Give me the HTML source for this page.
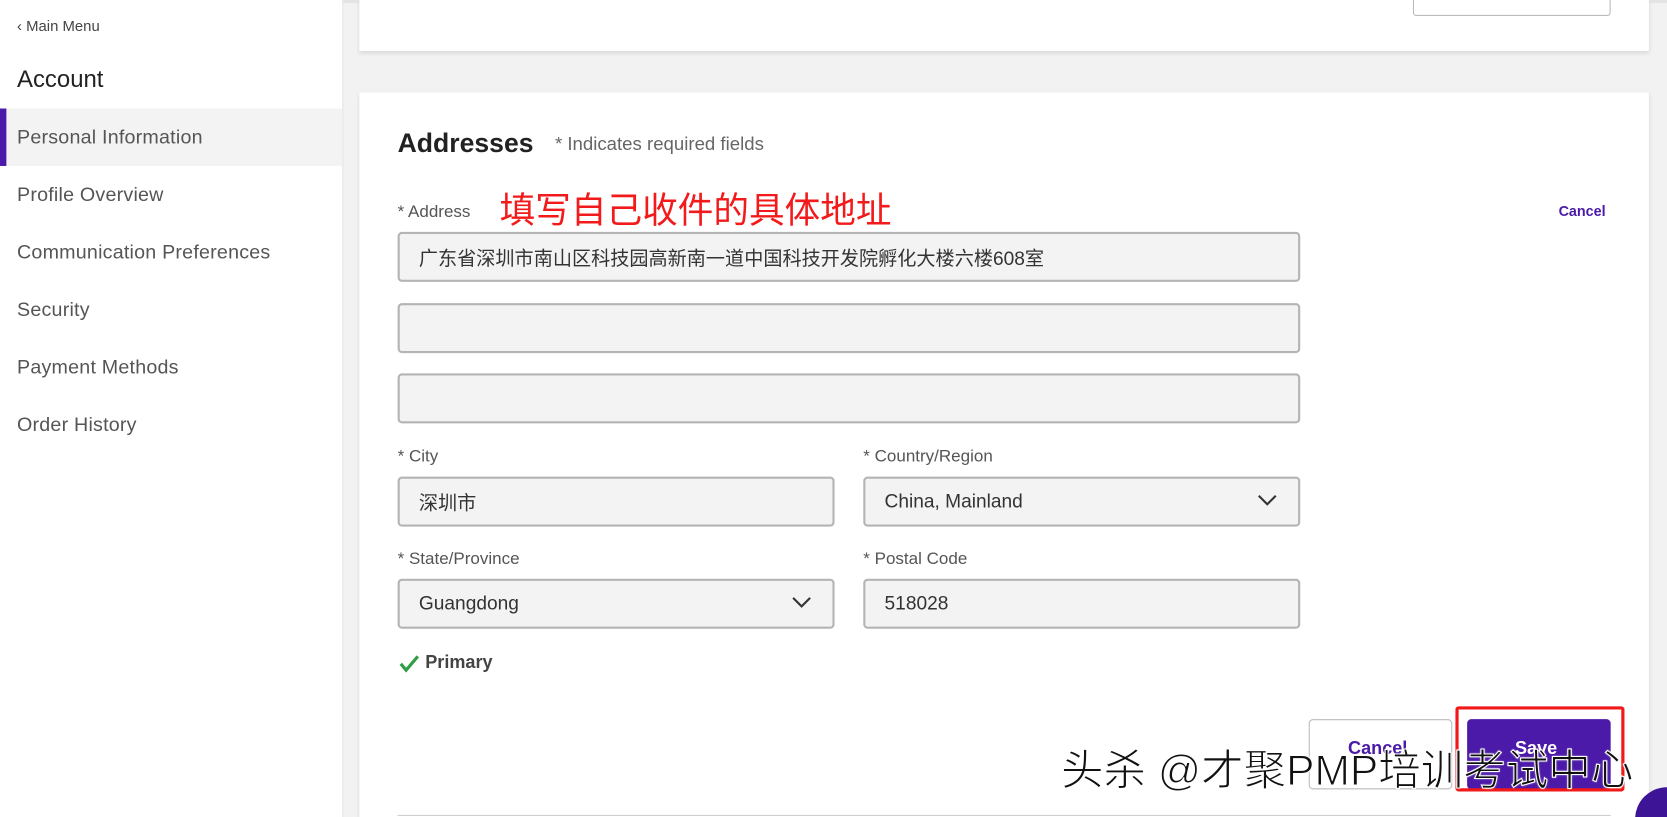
<!DOCTYPE html>
<html><head><meta charset="utf-8"><style>
html,body{margin:0;padding:0;width:1667px;height:817px;overflow:hidden;background:#f2f2f2;}
#w{position:absolute;left:0;top:0;width:1568px;height:768px;overflow:hidden;transform:scale(1.06314,1.0638);transform-origin:0 0;font-family:"Liberation Sans","Noto Sans CJK SC",sans-serif;color:#333;}
.a{position:absolute;white-space:nowrap;}
.side{position:absolute;left:0;top:0;width:322px;height:768px;background:#fff;border-right:1px solid #e2e2e2;}
.item{position:absolute;left:16px;font-size:18.5px;letter-spacing:.2px;color:#555;}
.card{position:absolute;background:#fff;box-shadow:0 2px 4px rgba(0,0,0,.12);}
.inp{position:absolute;background:#f3f3f3;border:2px solid #b4b4b4;border-radius:4px;box-sizing:border-box;font-size:18px;color:#333;padding-left:18px;display:flex;align-items:center;}
.lab{position:absolute;font-size:16px;color:#555;}
.chev{position:absolute;right:20px;top:14px;}
</style></head><body><div id="w">
<div class="a" style="left:0;top:0;width:1568px;height:3px;background:#e4e4e4"></div>
<div class="side">
 <div class="a" style="left:16px;top:16px;font-size:14px;color:#444">‹ Main Menu</div>
 <div class="a" style="left:16px;top:62px;font-size:22.5px;color:#222">Account</div>
 <div class="a" style="left:0;top:102px;width:322px;height:54px;background:#f3f3f3"></div>
 <div class="a" style="left:0;top:102px;width:6px;height:54px;background:#4a1aa8"></div>
 <div class="item" style="top:118px">Personal Information</div>
 <div class="item" style="top:172px">Profile Overview</div>
 <div class="item" style="top:226px">Communication Preferences</div>
 <div class="item" style="top:280px">Security</div>
 <div class="item" style="top:334px">Payment Methods</div>
 <div class="item" style="top:388px">Order History</div>
</div>
<div class="card" style="left:338px;top:0;width:1213px;height:48px">
 <div class="a" style="left:991px;top:-2px;width:184px;height:15px;border:1px solid #bbb;border-radius:3px"></div>
</div>
<div class="card" style="left:338px;top:87px;width:1213px;height:681px"></div>
<div class="a" style="left:374px;top:121px;font-size:25px;font-weight:bold;color:#222">Addresses</div>
<div class="a" style="left:522px;top:125px;font-size:17.5px;color:#666">* Indicates required fields</div>
<div class="lab" style="left:374px;top:191px">* Address</div>
<div class="a" style="left:470px;top:174px;font-size:33.5px;color:#f21a1a;font-family:'Noto Sans CJK SC',sans-serif;line-height:42px">填写自己收件的具体地址</div>
<div class="a" style="left:1466px;top:191px;font-size:13.5px;font-weight:bold;color:#4a1aa8">Cancel</div>
<div class="inp" style="left:374px;top:218px;width:849px;height:47px">广东省深圳市南山区科技园高新南一道中国科技开发院孵化大楼六楼608室</div>
<div class="inp" style="left:374px;top:285px;width:849px;height:47px"></div>
<div class="inp" style="left:374px;top:351px;width:849px;height:47px"></div>
<div class="lab" style="left:374px;top:421px">* City</div>
<div class="lab" style="left:812px;top:421px">* Country/Region</div>
<div class="inp" style="left:374px;top:448px;width:411px;height:47px">深圳市</div>
<div class="inp" style="left:812px;top:448px;width:411px;height:47px">China, Mainland<svg class="chev" width="18" height="12" viewBox="0 0 18 12"><path d="M1 2l8 8 8-8" fill="none" stroke="#333" stroke-width="2"/></svg></div>
<div class="lab" style="left:374px;top:517px">* State/Province</div>
<div class="lab" style="left:812px;top:517px">* Postal Code</div>
<div class="inp" style="left:374px;top:544px;width:411px;height:47px">Guangdong<svg class="chev" width="18" height="12" viewBox="0 0 18 12"><path d="M1 2l8 8 8-8" fill="none" stroke="#333" stroke-width="2"/></svg></div>
<div class="inp" style="left:812px;top:544px;width:411px;height:47px">518028</div>
<svg class="a" style="left:375px;top:615px" width="20" height="18" viewBox="0 0 20 18"><path d="M2 9l5 6L18 2" fill="none" stroke="#2f9e44" stroke-width="3"/></svg>
<div class="a" style="left:400px;top:613px;font-size:17px;font-weight:bold;color:#444">Primary</div>
<div class="a" style="left:1231px;top:676px;width:135px;height:66px;border:1px solid #bbb;border-radius:4px;box-sizing:border-box;background:#fff"></div>
<div class="a" style="left:1268px;top:694px;font-size:17px;font-weight:bold;color:#4a1aa8">Cancel</div>
<div class="a" style="left:1380px;top:676px;width:135px;height:66px;background:#4c1aa8;border-radius:4px"></div>
<div class="a" style="left:1425px;top:694px;font-size:17px;font-weight:bold;color:#fff">Save</div>
<div class="a" style="left:1369px;top:664px;width:159px;height:80px;border:3px solid #f01818;box-sizing:border-box;border-radius:3px"></div>
<div class="a" style="left:374px;top:766px;width:1141px;height:1px;background:#ccc"></div>
<div class="a" style="left:998px;top:700px;font-size:40px;color:#111;font-family:'WenQuanYi Zen Hei',sans-serif;line-height:50px;-webkit-text-stroke:1px #fff;text-shadow:0 0 2px #fff">头杀 @才聚PMP培训考试中心</div>
<div class="a" style="left:1538px;top:740px;width:60px;height:60px;border-radius:50%;background:#3d1496"></div>
</div></body></html>
